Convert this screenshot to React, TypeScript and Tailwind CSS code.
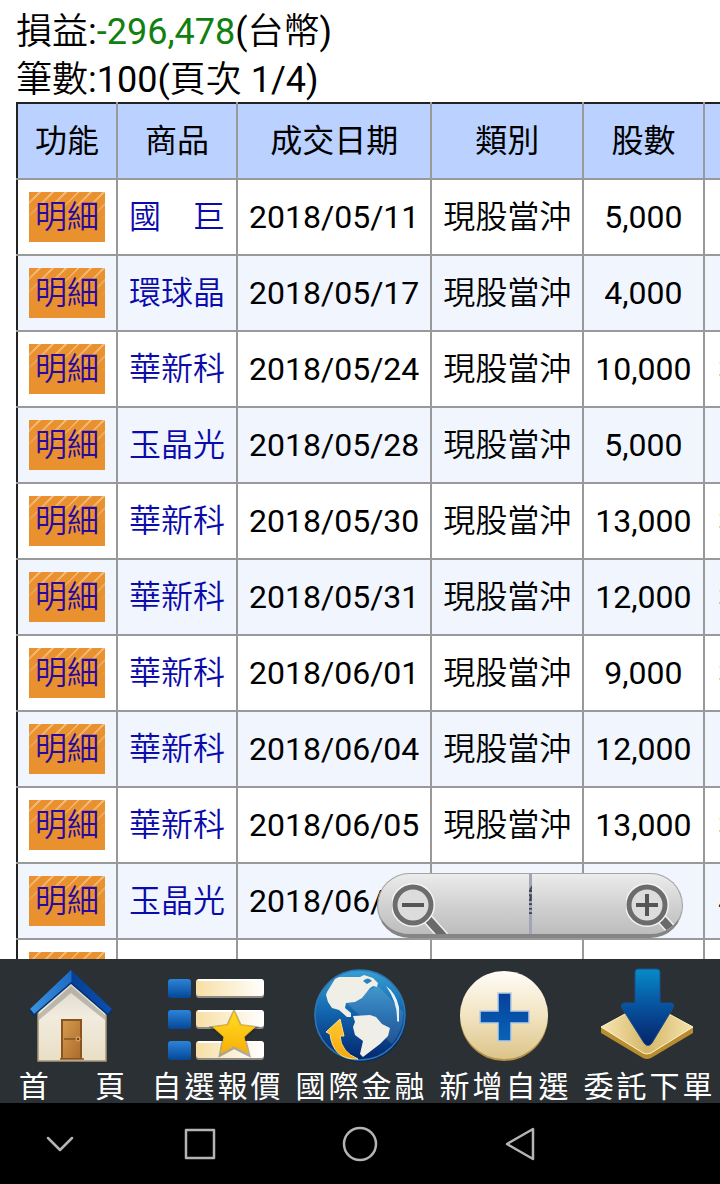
import type { ReactNode } from 'react';

interface Trade {
    product: string;
    date: string;
    shares: string;
    price: string;
}

const TRADES: Trade[] = [
    { product: '國　巨', date: '2018/05/11', shares: '5,000', price: '690' },
    { product: '環球晶', date: '2018/05/17', shares: '4,000', price: '550' },
    { product: '華新科', date: '2018/05/24', shares: '10,000', price: '304.50' },
    { product: '玉晶光', date: '2018/05/28', shares: '5,000', price: '405' },
    { product: '華新科', date: '2018/05/30', shares: '13,000', price: '338.50' },
    { product: '華新科', date: '2018/05/31', shares: '12,000', price: '342.50' },
    { product: '華新科', date: '2018/06/01', shares: '9,000', price: '356.50' },
    { product: '華新科', date: '2018/06/04', shares: '12,000', price: '371' },
    { product: '華新科', date: '2018/06/05', shares: '13,000', price: '378.50' },
    { product: '玉晶光', date: '2018/06/05', shares: '5,000', price: '446.50' },
    { product: '玉晶光', date: '2018/06/06', shares: '5,000', price: '451' },
];

const HEADERS = ['功能', '商品', '成交日期', '類別', '股數', '成交價'];

function Magnifier({ sign }: { sign: 'plus' | 'minus' }) {
    return (
        <svg className="h-[60px] w-14" viewBox="0 0 56 60" fill="none">
            <path d="M34 43L52 63" stroke="#f2f2f2" strokeWidth="11" />
            <path d="M34 43L52 63" stroke="#6a6a6a" strokeWidth="8" />
            <circle cx="21" cy="31" r="18" stroke="#f4f4f4" strokeWidth="8" />
            <circle cx="21" cy="31" r="18" fill="#dcdcdc" stroke="#6c6c6c" strokeWidth="5" />
            <path d="M10 31h22" stroke="#555" strokeWidth="4" />
            {sign === 'plus' && <path d="M21 20v22" stroke="#555" strokeWidth="4" />}
        </svg>
    );
}

function ZoomControls() {
    return (
        <div className="absolute right-[37px] bottom-[21px] grid h-[65px] w-[306px] grid-cols-2 gap-[3px] overflow-hidden rounded-full border border-b-4 border-[#a5a5a5] border-b-[#858585] bg-gray-500/60">
            <button
                aria-label="Zoom out"
                className="flex items-center bg-linear-to-b from-[#ececec] via-[#d2d2d2] to-[#bdbdbd] pl-[14px]"
            >
                <Magnifier sign="minus" />
            </button>
            <button
                aria-label="Zoom in"
                className="flex items-center justify-end bg-linear-to-b from-[#ececec] via-[#d2d2d2] to-[#bdbdbd]"
            >
                <Magnifier sign="plus" />
            </button>
        </div>
    );
}

function HomeIcon() {
    return (
        <svg className="h-24 w-24" viewBox="0 0 96 96">
            <defs>
                <linearGradient id="wall" x1="0" y1="0" x2="0" y2="1">
                    <stop offset="0" stopColor="#d8d4ca" />
                    <stop offset="0.45" stopColor="#f2ecdf" />
                    <stop offset="1" stopColor="#e9dec5" />
                </linearGradient>
                <linearGradient id="door" x1="0" y1="0" x2="1" y2="1">
                    <stop offset="0" stopColor="#d39b50" />
                    <stop offset="1" stopColor="#ad6c2b" />
                </linearGradient>
                <linearGradient id="roof" x1="0" y1="0" x2="1" y2="0">
                    <stop offset="0" stopColor="#3b93e0" />
                    <stop offset="0.5" stopColor="#1d6cc4" />
                    <stop offset="0.51" stopColor="#053f95" />
                    <stop offset="1" stopColor="#0b4fae" />
                </linearGradient>
            </defs>
            <path d="M14 94V44L47 13L82 44V94Z" fill="url(#wall)" stroke="#a69879" strokeWidth="1.5" />
            <path d="M15 47L47 19L81 48V53L47 26L15 53Z" fill="#77736a" opacity="0.4" />
            <path d="M47 3L88 42L84 48L47 16L10 48L6 42Z" fill="url(#roof)" />
            <path d="M6 43L10 48L47 16L84 48L88 43" fill="none" stroke="#04306f" strokeWidth="1.5" />
            <rect x="37" y="52" width="21" height="40" fill="#8b531d" />
            <rect x="39" y="54" width="17" height="37" fill="url(#door)" />
            <path d="M40 72h15M36 92h24" stroke="#8b531d" strokeWidth="1.5" />
            <circle cx="54" cy="72" r="2" fill="#7b4514" stroke="#edc07c" />
        </svg>
    );
}

function QuoteListIcon() {
    return (
        <svg className="h-24 w-24" viewBox="0 0 96 96">
            <defs>
                <linearGradient id="bullet" x1="0" y1="0" x2="0" y2="1">
                    <stop offset="0" stopColor="#2c84d8" />
                    <stop offset="1" stopColor="#044798" />
                </linearGradient>
                <linearGradient id="bar" x1="0" y1="0" x2="1" y2="0">
                    <stop offset="0" stopColor="#f7dfa4" />
                    <stop offset="1" stopColor="#ffffff" />
                </linearGradient>
                <linearGradient id="star" x1="0" y1="0" x2="0" y2="1">
                    <stop offset="0" stopColor="#ffe01f" />
                    <stop offset="1" stopColor="#f9ae0b" />
                </linearGradient>
            </defs>
            {[12, 43, 74].map((y) => (
                <g key={y}>
                    <rect x="0" y={y} width="23" height="19" rx="3" fill="url(#bullet)" />
                    <rect x="28" y={y + 2} width="68" height="17" rx="3" fill="#8d8b86" />
                    <rect x="28" y={y} width="68" height="17" rx="3" fill="url(#bar)" />
                    <path d={`M30 ${y + 1}h64`} stroke="#fff" strokeWidth="2" />
                </g>
            ))}
            <path
                d="M66 46L72 59L87 61L76 71L80 87L66 80L53 87L56 71L45 61L60 59Z"
                fill="#222"
                stroke="#222"
                strokeWidth="4"
                opacity="0.35"
            />
            <path
                d="M66 44L72 58L87 60L76 70L80 86L66 79L53 86L56 70L45 60L60 58Z"
                fill="url(#star)"
                stroke="#f5b40c"
            />
        </svg>
    );
}

function GlobeIcon() {
    return (
        <svg className="h-24 w-24" viewBox="0 0 96 96">
            <defs>
                <linearGradient id="sea" x1="0" y1="0" x2="0" y2="1">
                    <stop offset="0" stopColor="#37a0d4" />
                    <stop offset="0.5" stopColor="#1061aa" />
                    <stop offset="1" stopColor="#04256c" />
                </linearGradient>
                <linearGradient id="swoosh" x1="0" y1="0" x2="0" y2="1">
                    <stop offset="0" stopColor="#ffc933" />
                    <stop offset="1" stopColor="#f7a707" />
                </linearGradient>
            </defs>
            <circle cx="49" cy="50" r="45" fill="#08295f" />
            <circle cx="48" cy="48" r="45" fill="url(#sea)" stroke="#2b78b8" strokeWidth="1.5" />
            <path d="M33 35L66 19L91 45Q92 62 80 77Z" fill="#fff" opacity="0.12" />
            <path
                d="M15 25L23 12L27 10L48 10L52 8L61 11L66 16L65 20L61 19L58 21L50 31L43 35L34 36L33 41L39 46V50H35L27 43L20 41L16 35L14 28Z"
                fill="#efeee7"
            />
            <path d="M51 14Q56 9 60 14L55 17Z" fill="#2a82bd" />
            <path d="M41 49L58 48L64 50L70 57L78 61L76 69L68 77L51 90L48 87L51 74L43 68L41 60L43 55Z" fill="#efeee7" />
            <path d="M74 19Q84 26 87 40V55L85 54Q86 36 74 19Z" fill="#eaf2f7" />
            <path
                d="M14 65L28 52L32 69H28Q29 85 46 92Q21 93 18 67Z"
                fill="url(#swoosh)"
                stroke="#ffdf7c"
            />
        </svg>
    );
}

function AddIcon() {
    return (
        <svg className="h-24 w-24" viewBox="0 0 96 96">
            <defs>
                <linearGradient id="coin" x1="0" y1="0" x2="0" y2="1">
                    <stop offset="0" stopColor="#fffdf8" />
                    <stop offset="0.5" stopColor="#f3e4c1" />
                    <stop offset="1" stopColor="#dcc48a" />
                </linearGradient>
                <linearGradient id="cross" x1="0" y1="0" x2="0" y2="1">
                    <stop offset="0" stopColor="#06419a" />
                    <stop offset="1" stopColor="#0863b7" />
                </linearGradient>
            </defs>
            <circle cx="48" cy="50" r="44" fill="#b3924a" />
            <circle cx="48" cy="48" r="44" fill="url(#coin)" />
            <path
                d="M42 26H55V44H73V56H55V74H42V56H24V44H42Z"
                fill="url(#cross)"
                stroke="#b9cce4"
                strokeWidth="1.5"
            />
        </svg>
    );
}

function OrderIcon() {
    return (
        <svg className="h-24 w-24" viewBox="0 0 96 96">
            <defs>
                <linearGradient id="tile" x1="0" y1="0" x2="1" y2="0">
                    <stop offset="0" stopColor="#f7e6b4" />
                    <stop offset="0.5" stopColor="#d5b767" />
                    <stop offset="1" stopColor="#f5e3ae" />
                </linearGradient>
                <linearGradient id="arrow" x1="0" y1="0" x2="0" y2="1">
                    <stop offset="0" stopColor="#078bc7" />
                    <stop offset="0.5" stopColor="#07509d" />
                    <stop offset="1" stopColor="#052469" />
                </linearGradient>
            </defs>
            <path d="M1 60L47 36L93 60V66L51 91Q47 93 43 91L1 66Z" fill="#b88c31" />
            <path d="M1 60L47 35L93 60L51 86Q47 88 43 86Z" fill="url(#tile)" stroke="#fff3c8" />
            <path
                d="M38 2H57Q60 2 60 5V36H71Q75 37 73 41L52 76Q48 81 44 76L22 41Q20 37 24 36H35V5Q35 2 38 2Z"
                fill="url(#arrow)"
                stroke="#164f92"
            />
        </svg>
    );
}

const TABS: { label: string; icon: ReactNode }[] = [
    { label: '首 　頁', icon: <HomeIcon /> },
    { label: '自選報價', icon: <QuoteListIcon /> },
    { label: '國際金融', icon: <GlobeIcon /> },
    { label: '新增自選', icon: <AddIcon /> },
    { label: '委託下單', icon: <OrderIcon /> },
];

const SYSTEM_KEYS = [
    { name: 'Hide', d: 'M8 14L20 26L32 14' },
    { name: 'Recents', d: 'M6 6H34V34H6Z' },
    { name: 'Home', d: 'M20 4A16 16 0 1 1 20 36A16 16 0 1 1 20 4Z' },
    { name: 'Back', d: 'M33 5V35L7 20Z' },
];

export default function App() {
    return (
        <div className="flex h-screen flex-col overflow-hidden bg-white font-[Roboto,'Noto_Sans_CJK_TC_DemiLight','Noto_Sans_CJK_TC_Light','Noto_Sans_CJK_TC',sans-serif] text-black">
            <main className="relative min-h-0 flex-1 overflow-hidden pt-2 pl-4">
                <div className="-mb-[2px] text-4xl leading-[48px]">
                    <p>
                        損益:<span className="text-[#118011]">-296,478</span>(台幣)
                    </p>
                    <p>筆數:100(頁次 1/4)</p>
                </div>
                <table className="w-max border-collapse border-2 border-[#222] text-center text-[32px] leading-[50px] whitespace-nowrap">
                    <thead>
                        <tr className="h-[76px] bg-[#bbd1ff]">
                            {HEADERS.map((header) => (
                                <th
                                    key={header}
                                    className="border-2 border-x-[#999] border-t-[#222] border-b-[#999] px-[11px] font-[Roboto,'Noto_Sans_CJK_TC',sans-serif] font-normal first:border-l-[#222] last:w-[128px]"
                                >
                                    {header}
                                </th>
                            ))}
                        </tr>
                    </thead>
                    <tbody>
                        {TRADES.map((trade, i) => (
                            <tr
                                key={i}
                                className="h-[76px] even:bg-[#f0f5fe] [&>td]:border-2 [&>td]:border-[#999] [&>td]:px-[11px] [&>td:first-child]:border-l-[#222]"
                            >
                                <td>
                                    <a
                                        href="#detail"
                                        className="block bg-[#e9912f] bg-[linear-gradient(to_bottom,transparent,#e9912f_60%),repeating-linear-gradient(135deg,#e9912f_0_7px,#f3bd7e_7px_9px)] px-[6px] text-[#2a0a9c]"
                                    >
                                        明細
                                    </a>
                                </td>
                                <td>
                                    <a href="#product" className="text-[#0b0bab]">
                                        {trade.product}
                                    </a>
                                </td>
                                <td>{trade.date}</td>
                                <td>現股當沖</td>
                                <td>{trade.shares}</td>
                                <td>{trade.price}</td>
                            </tr>
                        ))}
                    </tbody>
                </table>
                <ZoomControls />
            </main>

            <nav className="grid h-36 shrink-0 grid-cols-5 bg-[#2b3034] text-white">
                {TABS.map((tab) => (
                    <button key={tab.label} className="flex flex-col items-center pt-2">
                        {tab.icon}
                        <span className="pl-[3px] font-[Roboto,'Noto_Sans_CJK_TC',sans-serif] text-[30px] leading-[48px] tracking-widest whitespace-pre">
                            {tab.label}
                        </span>
                    </button>
                ))}
            </nav>

            <footer className="flex h-[81px] shrink-0 items-center bg-black">
                {SYSTEM_KEYS.map((key) => (
                    <button key={key.name} aria-label={key.name} className="flex w-40 justify-center first:w-30">
                        <svg
                            className="h-10 w-10"
                            viewBox="0 0 40 40"
                            fill="none"
                            stroke="#b4b4b4"
                            strokeWidth="2.5"
                            strokeLinejoin="round"
                            strokeLinecap="round"
                        >
                            <path d={key.d} />
                        </svg>
                    </button>
                ))}
            </footer>
        </div>
    );
}
